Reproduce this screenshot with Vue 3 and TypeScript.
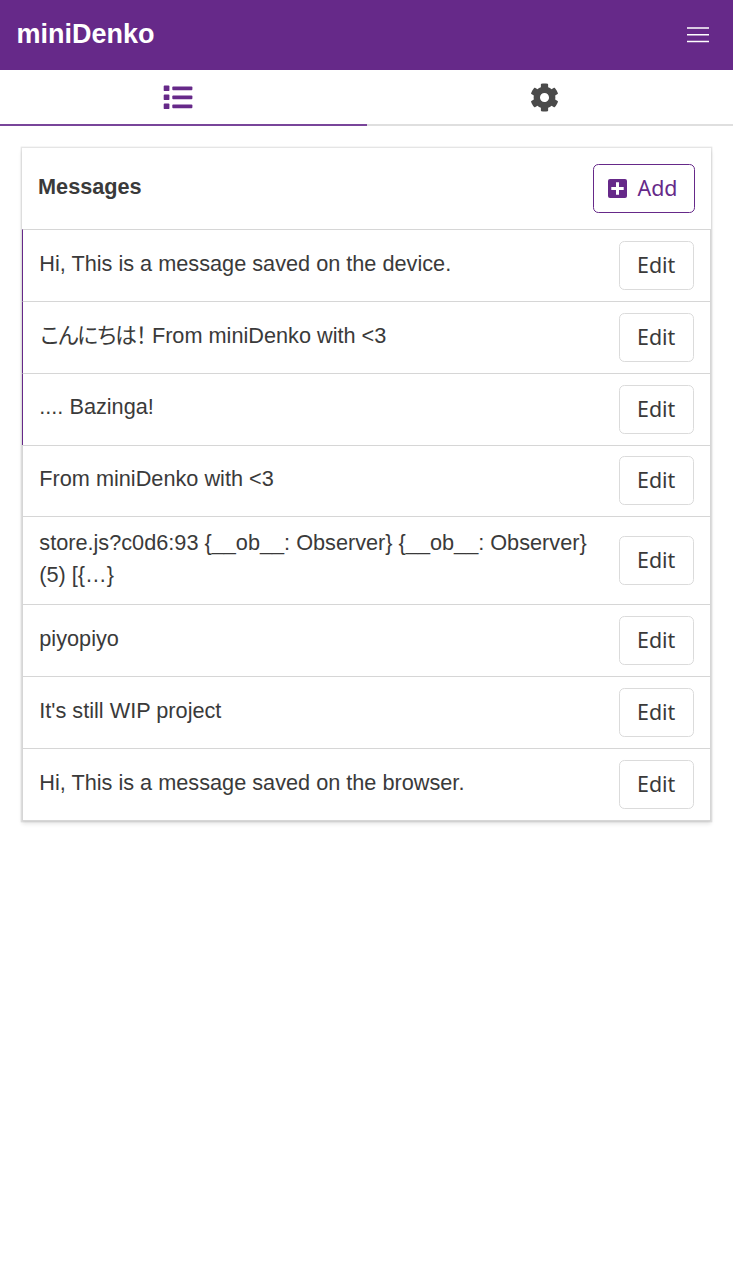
<script setup lang="ts">
interface Message {
  kana?: string
  text: string
  onDevice: boolean
}

const messages: Message[] = [
  { text: 'Hi, This is a message saved on the device.', onDevice: true },
  { kana: 'こんにちは！', text: ' From miniDenko with <3', onDevice: true },
  { text: '.... Bazinga!', onDevice: true },
  { text: 'From miniDenko with <3', onDevice: false },
  { text: 'store.js?c0d6:93 {__ob__: Observer} {__ob__: Observer} (5) [{…}', onDevice: false },
  { text: 'piyopiyo', onDevice: false },
  { text: "It's still WIP project", onDevice: false },
  { text: 'Hi, This is a message saved on the browser.', onDevice: false },
]
</script>

<template>
  <div class="page">
    <header class="navbar">
      <span class="brand">miniDenko</span>
      <svg class="burger" viewBox="0 0 22 16" aria-label="menu">
        <path d="M0 1H22M0 7.7H22M0 14.5H22" stroke="#fff" stroke-width="1.35" />
      </svg>
    </header>

    <nav class="tabs">
      <a class="tab active">
        <svg class="tab-icon" viewBox="0 0 30 30">
          <rect x="0.7" y="3.6" width="5.7" height="5.5" rx="0.9" />
          <rect x="0.7" y="12.6" width="5.7" height="5.5" rx="0.9" />
          <rect x="0.7" y="21.6" width="5.7" height="5.5" rx="0.9" />
          <rect x="9.3" y="4.5" width="20.1" height="3.7" rx="0.9" />
          <rect x="9.3" y="13.5" width="20.1" height="3.7" rx="0.9" />
          <rect x="9.3" y="22.5" width="20.1" height="3.7" rx="0.9" />
        </svg>
      </a>
      <a class="tab">
        <svg class="tab-icon gear" viewBox="0 0 512 512">
          <path d="M487.4 315.7l-42.6-24.6c4.3-23.2 4.3-47 0-70.2l42.6-24.6c4.9-2.8 7.1-8.6 5.5-14-11.1-35.6-30-67.8-54.7-94.6-3.8-4.1-10-5.1-14.8-2.3L380.8 110c-17.9-15.4-38.5-27.3-60.8-35.1V25.8c0-5.6-3.9-10.5-9.4-11.7-36.7-8.2-74.3-7.8-109.2 0-5.5 1.2-9.4 6.1-9.4 11.7V75c-22.2 7.9-42.8 19.8-60.8 35.1L88.7 85.5c-4.9-2.8-11-1.9-14.8 2.3-24.7 26.7-43.6 58.9-54.7 94.6-1.7 5.4.6 11.2 5.5 14L67.3 221c-4.3 23.2-4.3 47 0 70.2l-42.6 24.6c-4.9 2.8-7.1 8.6-5.5 14 11.1 35.6 30 67.8 54.7 94.6 3.8 4.1 10 5.1 14.8 2.3l42.6-24.6c17.9 15.4 38.5 27.3 60.8 35.1v49.2c0 5.6 3.9 10.5 9.4 11.7 36.7 8.2 74.3 7.8 109.2 0 5.5-1.2 9.4-6.1 9.4-11.7v-49.2c22.2-7.9 42.8-19.8 60.8-35.1l42.6 24.6c4.9 2.8 11 1.9 14.8-2.3 24.7-26.7 43.6-58.9 54.7-94.6 1.5-5.5-.7-11.3-5.6-14.1zM256 336c-44.1 0-80-35.9-80-80s35.9-80 80-80 80 35.9 80 80-35.9 80-80 80z" />
        </svg>
      </a>
    </nav>

    <main class="card">
      <div class="card-head">
        <h1 class="title">Messages</h1>
        <button class="button add">
          <svg class="plus" viewBox="0 0 19 19">
            <rect width="19" height="19" rx="2" />
            <path d="M9.5 3.3V15.7M3.3 9.5H15.7" stroke="#fff" stroke-width="3" />
          </svg>
          <span>Add</span>
        </button>
      </div>
      <ul class="rows">
        <li v-for="(m, i) in messages" :key="i" class="row" :class="{ device: m.onDevice }">
          <span class="text"><span v-if="m.kana" class="kana">{{ m.kana }}</span>{{ m.text }}</span>
          <button class="button edit">Edit</button>
        </li>
      </ul>
    </main>
  </div>
</template>

<style>
body {
  margin: 0;
  background: #fff;
}
</style>

<style scoped>
.page {
  min-height: 1280px;
  color: #3a3a3a;
  font-family: "Liberation Sans", "Noto Sans CJK JP", sans-serif;
  font-size: 21.7px;
  line-height: 32.6px;
}
.navbar {
  height: 70.4px;
  box-sizing: border-box;
  display: flex;
  align-items: center;
  justify-content: space-between;
  padding: 0 24px 1.4px 16.5px;
  background: #662989;
  color: #fff;
}
.brand {
  font-size: 27px;
  font-weight: 700;
}
.burger {
  width: 22px;
  height: 16px;
}
.tabs {
  display: flex;
  height: 56px;
}
.tab {
  flex: 1;
  box-sizing: border-box;
  display: flex;
  justify-content: center;
  align-items: center;
  padding-right: 11px;
  border-bottom: 2px solid #dfdfdf;
  fill: #4a4a4a;
}
.tab.active {
  border-bottom-color: #79459a;
  fill: #662989;
}
.tab-icon {
  width: 30px;
  height: 30px;
}
.tab-icon.gear {
  width: 29px;
  height: 29px;
}
.card {
  margin: 21.6px 22px 0;
  box-shadow: 0 2.7px 4px rgba(10, 10, 10, 0.1), 0 0 0 1.36px rgba(10, 10, 10, 0.1);
}
.card-head {
  height: 81.2px;
  box-sizing: border-box;
  display: flex;
  align-items: center;
  justify-content: space-between;
  padding: 0 16px;
}
.title {
  margin: 0;
  padding-bottom: 3px;
  font-size: 21.7px;
  line-height: 32.6px;
}
.rows {
  margin: 0;
  padding: 0;
  list-style: none;
  border-bottom: 1px solid #d6d6d6;
}
.row {
  box-sizing: border-box;
  min-height: 71.8px;
  display: flex;
  align-items: center;
  justify-content: space-between;
  padding: 10.4px 16.3px 10.6px;
  border: 1px solid #d6d6d6;
  border-bottom: 0;
}
.row.device {
  border-left-color: #662989;
}
.text {
  width: 560px;
  margin-bottom: 1.7px;
  margin-top: -0.9px;
}
.kana {
  margin-left: 1px;
  font-family: "Noto Sans CJK JP", sans-serif;
  font-feature-settings: "palt";
  letter-spacing: -1px;
  line-height: 1;
}
.button {
  box-sizing: border-box;
  height: 49px;
  display: flex;
  align-items: center;
  justify-content: center;
  padding: 0 0 2px;
  border: 1.4px solid #dbdbdb;
  border-radius: 5.4px;
  background: #fff;
  color: #3a3a3a;
  font-family: "Noto Sans", sans-serif;
  font-size: 21.4px;
}
.edit {
  width: 75px;
}
.add {
  width: 102px;
  gap: 10.5px;
  padding-right: 2.5px;
  border-color: #662989;
  color: #662989;
}
.plus {
  width: 19px;
  height: 19px;
  margin-top: 1.5px;
  fill: #662989;
}
</style>
